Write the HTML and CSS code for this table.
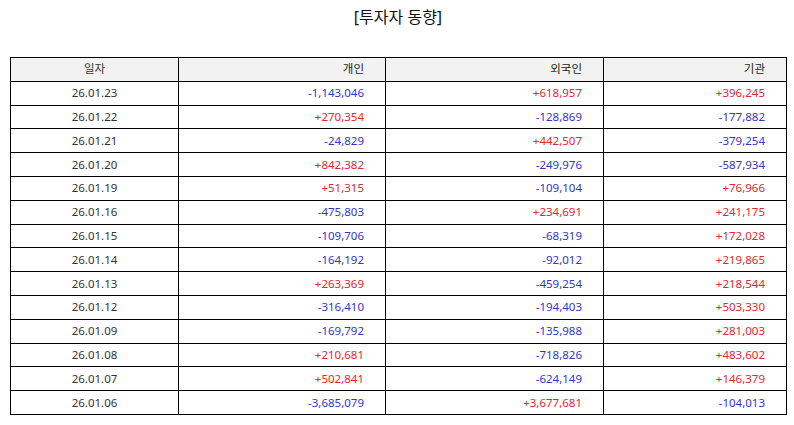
FILE: index.html
```html
<!DOCTYPE html>
<html lang="ko">
<head>
<meta charset="utf-8">
<link rel="stylesheet" href="styles.css">
</head>
<body>
<h1 class="title">[투자자 동향]</h1>
<table class="inv">
<colgroup><col class="c1"><col class="c2"><col class="c3"><col class="c4"></colgroup>
<thead><tr><th class="date">일자</th><th>개인</th><th>외국인</th><th>기관</th></tr></thead>
<tbody>
<tr><td class="date">26.01.23</td><td class="dn">-1,143,046</td><td class="up">+618,957</td><td class="up">+396,245</td></tr>
<tr><td class="date">26.01.22</td><td class="up">+270,354</td><td class="dn">-128,869</td><td class="dn">-177,882</td></tr>
<tr><td class="date">26.01.21</td><td class="dn">-24,829</td><td class="up">+442,507</td><td class="dn">-379,254</td></tr>
<tr><td class="date">26.01.20</td><td class="up">+842,382</td><td class="dn">-249,976</td><td class="dn">-587,934</td></tr>
<tr><td class="date">26.01.19</td><td class="up">+51,315</td><td class="dn">-109,104</td><td class="up">+76,966</td></tr>
<tr><td class="date">26.01.16</td><td class="dn">-475,803</td><td class="up">+234,691</td><td class="up">+241,175</td></tr>
<tr><td class="date">26.01.15</td><td class="dn">-109,706</td><td class="dn">-68,319</td><td class="up">+172,028</td></tr>
<tr><td class="date">26.01.14</td><td class="dn">-164,192</td><td class="dn">-92,012</td><td class="up">+219,865</td></tr>
<tr><td class="date">26.01.13</td><td class="up">+263,369</td><td class="dn">-459,254</td><td class="up">+218,544</td></tr>
<tr><td class="date">26.01.12</td><td class="dn">-316,410</td><td class="dn">-194,403</td><td class="up">+503,330</td></tr>
<tr><td class="date">26.01.09</td><td class="dn">-169,792</td><td class="dn">-135,988</td><td class="up">+281,003</td></tr>
<tr><td class="date">26.01.08</td><td class="up">+210,681</td><td class="dn">-718,826</td><td class="up">+483,602</td></tr>
<tr><td class="date">26.01.07</td><td class="up">+502,841</td><td class="dn">-624,149</td><td class="up">+146,379</td></tr>
<tr><td class="date">26.01.06</td><td class="dn">-3,685,079</td><td class="up">+3,677,681</td><td class="dn">-104,013</td></tr>
</tbody>
</table>
</body>
</html>
```
FILE: styles.css
```css
html, body {
  margin: 0;
  padding: 0;
  background: #ffffff;
}
body {
  font-family: "Noto Sans", "Noto Sans CJK KR", sans-serif;
  color: #222222;
  padding: 0 8px 0 10px;
}
.title {
  margin: 0;
  height: 57px;
  padding-top: 5px;
  box-sizing: border-box;
  text-align: center;
  font-size: 16px;
  font-weight: normal;
  line-height: 24px;
  color: #111111;
}
.inv {
  border-collapse: collapse;
  width: 776px;
  table-layout: fixed;
  font-size: 11.5px;
}
.c1 { width: 168px; }
.c2 { width: 207px; }
.c3 { width: 218px; }
.c4 { width: 183px; }
.inv th, .inv td {
  border: 1px solid #000000;
  height: 23.8px;
  padding: 0 21px 0 4px;
  text-align: right;
  font-weight: normal;
  line-height: 14px;
  box-sizing: border-box;
}
.inv th {
  background: #f2f2f2;
  color: #222222;
}
.inv .date {
  text-align: center;
  padding: 0 4px;
  color: #333333;
}
.up { color: #e3262e; }
.dn { color: #3535cc; }
```
